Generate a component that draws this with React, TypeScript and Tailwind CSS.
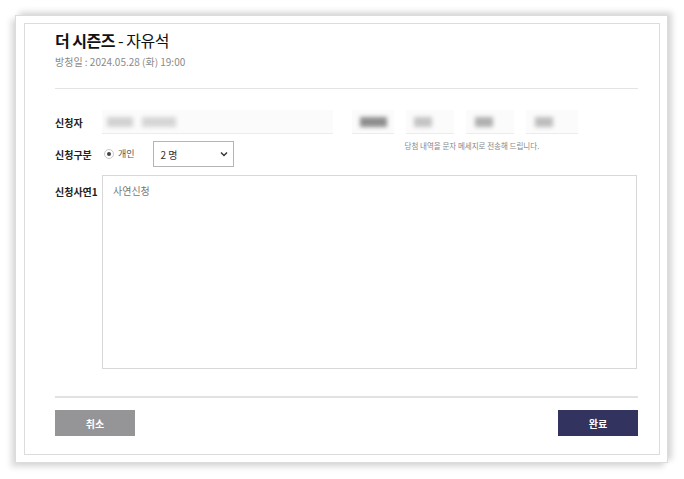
import React from 'react';

const font = { fontFamily: '"Noto Sans CJK KR", "Noto Sans", sans-serif' };

function Blur({ w, block, bx, color }: { w: number; block: number; bx: number; color: string }) {
  return (
    <div className="h-6 bg-[#fbfbfb] border-b border-[#ececec] flex items-center" style={{ width: w }}>
      <div className="h-[10px] blur-[2px]" style={{ width: block, marginLeft: bx, background: color }} />
    </div>
  );
}

export default function App() {
  return (
    <div className="w-[684px] h-[479px] bg-white pt-[15px] pl-[15px]" style={font}>
      <div className="w-[653px] h-[448px] bg-white border border-[#dcdcdc] pt-[7px] pl-[8px] shadow-[4px_-3px_6px_rgba(0,0,0,0.16),-4px_4px_6px_rgba(0,0,0,0.14)]">
        <div className="w-[636px] h-[432px] border border-[#dcdcdc] pl-[30px] pr-[21px] pt-[5px]">
          {/* header */}
          <h1 className="text-[16px] leading-[22px] text-[#111] tracking-[-0.5px]">
            <span className="font-bold">더 시즌즈</span>
            <span> - 자유석</span>
          </h1>
          <p className="mt-[3px] text-[10px] leading-4 text-[#8a8a8a]">방청일 : 2024.05.28 (화) 19:00</p>
          <div className="mt-[18px] h-px bg-[#e3e3e3]" />

          {/* 신청자 */}
          <div className="mt-[21px] flex items-center h-6">
            <div className="w-[47px] text-[10px] font-bold text-[#222]">신청자</div>
            <div className="w-[231px] h-6 bg-[#fbfbfb] border-b border-[#ececec] flex items-center gap-[9px] pl-[5px]">
              <div className="w-[26px] h-[10px] bg-[#d2d2d2] blur-[2px]" />
              <div className="w-[34px] h-[10px] bg-[#d6d6d6] blur-[2px]" />
            </div>
            <div className="ml-[19px]">
              <Blur w={42} block={27} bx={8} color="#8e8e8e" />
            </div>
            <div className="ml-[12px]">
              <Blur w={48} block={18} bx={8} color="#c4c4c4" />
            </div>
            <div className="ml-[12px]">
              <Blur w={48} block={18} bx={9} color="#b0b0b0" />
            </div>
            <div className="ml-[12px]">
              <Blur w={52} block={18} bx={9} color="#bdbdbd" />
            </div>
          </div>

          {/* 신청구분 */}
          <div className="mt-[7px] flex items-start">
            <div className="w-[47px] h-[26px] flex items-center text-[10px] font-bold text-[#222]">신청구분</div>
            <div className="h-[26px] flex items-center">
              <span className="ml-[2px] w-[10px] h-[10px] rounded-full border border-[#c8c8c8] flex items-center justify-center">
                <span className="w-[4px] h-[4px] rounded-full bg-[#444]" />
              </span>
              <span className="ml-[4px] text-[9px] text-[#555]">개인</span>
            </div>
            <div className="ml-[18px] w-[81px] h-[26px] border border-[#b5b5b5] flex items-center justify-between pl-[7px] pr-[5px] text-[10px] text-[#333]">
              <span>2 명</span>
              <svg width="8" height="6" viewBox="0 0 8 6" fill="none">
                <path d="M1 1.5L4 4.5L7 1.5" stroke="#333" strokeWidth="1.4" />
              </svg>
            </div>
            <p className="ml-[171px] mt-[-1px] text-[7.5px] leading-3 text-[#888]">당첨 내역을 문자 메세지로 전송해 드립니다.</p>
          </div>

          {/* 신청사연1 */}
          <div className="mt-[8px] flex items-start">
            <div className="w-[47px] pt-[9px] text-[10px] font-bold text-[#222]">신청사연1</div>
            <div className="w-[535px] h-[194px] border border-[#d8d8d8] px-[10px] pt-[7px] text-[10px] text-[#777]">사연신청</div>
          </div>

          <div className="mt-[27px] h-[2px] bg-[#e2e2e2]" />

          {/* buttons */}
          <div className="mt-[12px] flex justify-between">
            <button className="w-[80px] h-[26px] bg-[#959598] text-white text-[10px] font-bold">취소</button>
            <button className="w-[80px] h-[26px] bg-[#333360] text-white text-[10px] font-bold">완료</button>
          </div>
        </div>
      </div>
    </div>
  );
}
